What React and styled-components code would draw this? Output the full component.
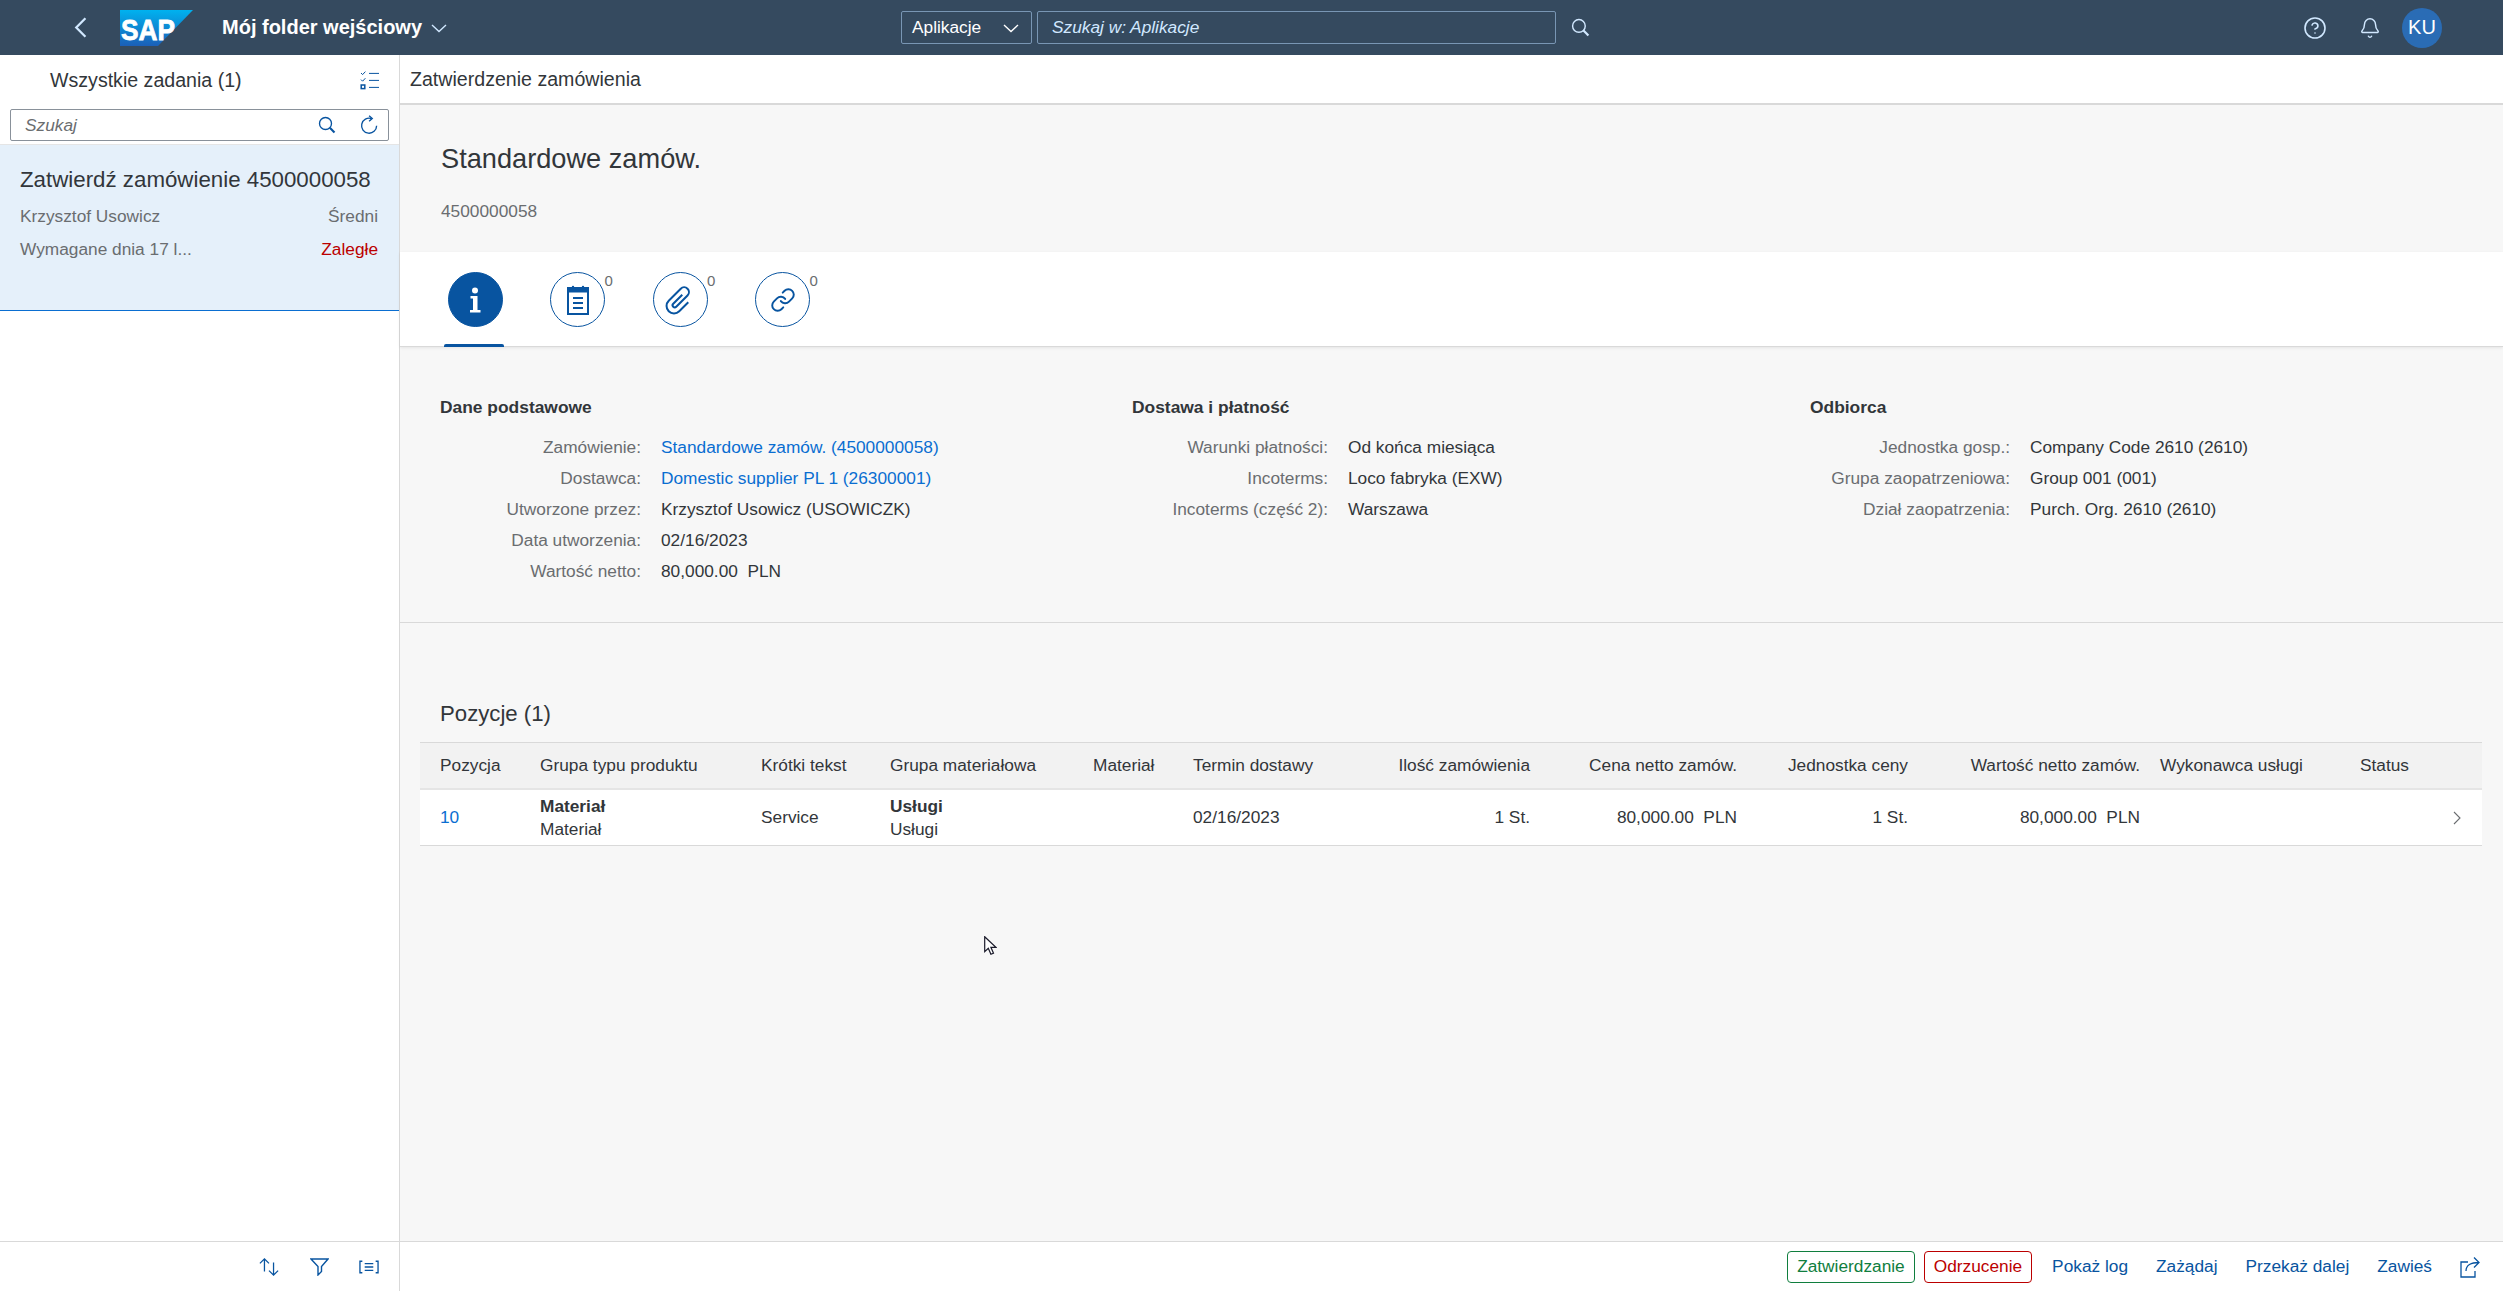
import React from 'react';
import styled, { createGlobalStyle } from 'styled-components';
import { Bell, CircleHelp, Link as LinkIcon } from 'lucide-react';

const GlobalStyle = createGlobalStyle`
  html, body {
    margin: 0;
    padding: 0;
    height: 100%;
    overflow: hidden;
    background: #fff;
    font-family: "Liberation Sans", Arial, sans-serif;
    font-size: 17.3px;
    color: #32363a;
  }
  #root { height: 100%; }
`;

const Page = styled.div`
  position: relative;
  height: 100vh;
  display: flex;
  flex-direction: column;
`;

/* ---------- shell bar ---------- */

const ShellBar = styled.header`
  flex: 0 0 55px;
  display: grid;
  grid-template-columns: 901px 1fr auto;
  align-items: center;
  background: #354a5f;
`;

const ShellLeft = styled.div`
  display: flex;
  align-items: center;
  padding-left: 71px;
`;

const BackButton = styled.span`
  display: flex;
  margin-right: 28px;
  color: #d1e8ff;
`;

const AppTitle = styled.span`
  margin-left: 29px;
  font-size: 20px;
  font-weight: 700;
  color: #fff;
`;

const TitleChevron = styled.span`
  display: flex;
  margin-left: 9px;
  color: #d1e8ff;
`;

const SearchGroup = styled.div`
  display: flex;
  align-items: center;
  gap: 5px;
`;

const ScopeSelect = styled.div`
  box-sizing: border-box;
  width: 131px;
  height: 33px;
  display: flex;
  align-items: center;
  justify-content: space-between;
  padding: 0 12px 0 10px;
  border: 1px solid #7996b4;
  border-radius: 2px;
  color: #fff;
`;

const ShellInput = styled.div`
  box-sizing: border-box;
  width: 519px;
  height: 33px;
  display: flex;
  align-items: center;
  padding-left: 14px;
  border: 1px solid #7996b4;
  border-radius: 2px;
  color: #d1e8ff;
  font-style: italic;
`;

const ShellSearch = styled.span`
  display: flex;
  margin-left: 10px;
  color: #d1e8ff;
`;

const ShellRight = styled.div`
  display: flex;
  align-items: center;
  padding-right: 61px;
`;

const ShellIcon = styled.span`
  width: 55px;
  display: flex;
  justify-content: center;
  color: #d1e8ff;
`;

const Avatar = styled.span`
  width: 40px;
  height: 40px;
  margin-left: 5px;
  display: flex;
  align-items: center;
  justify-content: center;
  border-radius: 50%;
  background: #2a6cb5;
  color: #fff;
  font-size: 20px;
`;

/* ---------- columns ---------- */

const Columns = styled.div`
  flex: 1;
  min-height: 0;
  display: flex;
`;

const MasterColumn = styled.aside`
  box-sizing: border-box;
  flex: 0 0 400px;
  display: flex;
  flex-direction: column;
  border-right: 1px solid #d9d9d9;
`;

const DetailColumn = styled.main`
  flex: 1;
  min-width: 0;
  display: flex;
  flex-direction: column;
`;

/* ---------- master list ---------- */

const MasterHeader = styled.div`
  box-sizing: border-box;
  height: 54px;
  display: flex;
  align-items: center;
  justify-content: space-between;
  padding: 0 20px 3px 50px;
  font-size: 19.6px;
`;

const SearchBar = styled.div`
  height: 35px;
  padding: 0 10px;
  border-bottom: 1px solid #e5e5e5;
`;

const SearchField = styled.div`
  box-sizing: border-box;
  height: 32px;
  display: flex;
  align-items: center;
  justify-content: space-between;
  padding: 0 9px 0 14px;
  border: 1px solid #89919a;
  border-radius: 2px;
`;

const Placeholder = styled.span`
  color: #6a6d70;
  font-style: italic;
`;

const SearchIcons = styled.span`
  display: flex;
  align-items: center;
  gap: 24px;
  color: #0854a0;
`;

const TaskItem = styled.div`
  box-sizing: border-box;
  height: 166px;
  padding: 21px 21px 0 20px;
  background: #e5f0fa;
  border-bottom: 1px solid #0a6ed1;
`;

const TaskTitle = styled.div`
  font-size: 22.3px;
  line-height: 28px;
`;

const TaskRow = styled.div`
  display: flex;
  justify-content: space-between;
  margin-top: ${props => props.$gap}px;
  line-height: 22px;
  color: #6a6d70;
`;

const Overdue = styled.span`
  color: #bb0000;
`;

const Spacer = styled.div`
  flex: 1;
`;

const MasterFooter = styled.footer`
  box-sizing: border-box;
  flex: 0 0 50px;
  display: flex;
  align-items: center;
  justify-content: flex-end;
  gap: 30px;
  padding-right: 20px;
  border-top: 1px solid #d9d9d9;
  color: #0854a0;
`;

const FooterIcon = styled.span`
  width: 20px;
  display: flex;
  justify-content: center;
`;

/* ---------- detail header ---------- */

const DetailTitleBar = styled.div`
  box-sizing: border-box;
  flex: 0 0 50px;
  display: flex;
  align-items: center;
  padding-left: 10px;
  border-bottom: 2px solid #d9d9d9;
  font-size: 19.6px;
`;

const Scroll = styled.div`
  flex: 1;
  min-height: 0;
  background: #f7f7f7;
`;

const ObjectHeader = styled.div`
  box-sizing: border-box;
  height: 147px;
  padding: 38px 41px 0;
`;

const ObjectTitle = styled.h1`
  margin: 0;
  font-size: 27.2px;
  font-weight: 400;
  line-height: 32px;
`;

const ObjectNumber = styled.div`
  margin-top: 26px;
  line-height: 20px;
  color: #6a6d70;
`;

/* ---------- icon tabs ---------- */

const TabBar = styled.div`
  box-sizing: border-box;
  height: 95px;
  display: flex;
  padding-left: 24px;
  background: #fff;
  border-bottom: 1px solid #d9d9d9;
  box-shadow: 0 1px 3px rgba(0, 0, 0, 0.08);
`;

const Tab = styled.div`
  position: relative;
  width: 102.5px;
  padding-top: 20px;
  display: flex;
  justify-content: center;
  align-items: flex-start;
`;

const TabCircle = styled.span`
  box-sizing: border-box;
  width: 55px;
  height: 55px;
  display: flex;
  align-items: center;
  justify-content: center;
  border-radius: 50%;
  border: 1px solid #0854a0;
  background: ${props => (props.$active ? '#0854a0' : '#fff')};
  color: ${props => (props.$active ? '#fff' : '#0854a0')};
`;

const TabCount = styled.span`
  position: absolute;
  left: 78px;
  top: 20px;
  font-size: 15px;
  line-height: 18px;
  color: #6a6d70;
`;

const TabUnderline = styled.span`
  position: absolute;
  left: 20px;
  bottom: -1px;
  width: 60px;
  height: 3px;
  border-radius: 2px 2px 0 0;
  background: #0854a0;
`;

/* ---------- form ---------- */

const FormArea = styled.section`
  box-sizing: border-box;
  height: 276px;
  display: grid;
  grid-template-columns: 692px 678px 1fr;
  padding: 49px 0 0 40px;
  border-bottom: 1px solid #d9d9d9;
`;

const FormTitle = styled.h3`
  margin: 0 0 14px;
  font-size: 17.4px;
  font-weight: 700;
  line-height: 22px;
`;

const FormRow = styled.div`
  display: grid;
  grid-template-columns: ${props => props.$labelWidth}px 1fr;
  column-gap: 20px;
  line-height: 31px;
`;

const FormLabel = styled.span`
  text-align: right;
  color: #6a6d70;
`;

const FormValue = styled.span`
  white-space: pre;
  color: ${props => (props.$link ? '#0a6ed1' : 'inherit')};
`;

/* ---------- table ---------- */

const TableTitle = styled.h2`
  margin: 77px 0 14px 40px;
  font-size: 22.2px;
  font-weight: 400;
  line-height: 28px;
`;

const tableColumns = '100px 221px 129px 203px 100px 167px 190px 207px 171px 232px 200px 100px 1fr';

const TableHead = styled.div`
  box-sizing: border-box;
  height: 48px;
  margin: 0 21px 0 20px;
  display: grid;
  grid-template-columns: ${tableColumns};
  align-items: center;
  background: #f2f2f2;
  border-top: 1px solid #d9d9d9;
  border-bottom: 2px solid #e5e5e5;
`;

const TableRow = styled.div`
  box-sizing: border-box;
  height: 56px;
  margin: 0 21px 0 20px;
  display: grid;
  grid-template-columns: ${tableColumns};
  align-items: center;
  background: #fff;
  border-bottom: 1px solid #d9d9d9;
`;

const Cell = styled.div`
  padding-left: 20px;
  text-align: ${props => (props.$right ? 'right' : 'left')};
  line-height: 23px;
  white-space: pre;
`;

const CellLink = styled.span`
  color: #0a6ed1;
`;

const Strong = styled.div`
  font-weight: 700;
`;

const RowChevron = styled.span`
  display: flex;
  justify-content: flex-end;
  padding-right: 17px;
  color: #6a6d70;
`;

/* ---------- footer ---------- */

const DetailFooter = styled.footer`
  box-sizing: border-box;
  flex: 0 0 50px;
  display: flex;
  align-items: center;
  justify-content: flex-end;
  padding: 0 23px 0 0;
  border-top: 1px solid #d9d9d9;
  background: #fff;
`;

const OutlineButton = styled.span`
  box-sizing: border-box;
  height: 32px;
  display: flex;
  align-items: center;
  margin-right: 9px;
  padding: 0 9px;
  border: 1px solid ${props => props.$color};
  border-radius: 4px;
  color: ${props => props.$color};
`;

const TextAction = styled.span`
  margin-left: ${props => (props.$first ? 11 : 28)}px;
  color: #0854a0;
`;

const ShareButton = styled.span`
  display: flex;
  margin-left: 28px;
  color: #0854a0;
`;

const MouseCursor = styled.svg`
  position: absolute;
  left: 984px;
  top: 936px;
`;

/* ---------- drawings ---------- */

const Chevron = ({ size = 16, dir = 'down', width = 1.4 }) => {
  const points = {
    down: '1,5 8,11.500 15,5',
    left: '11,1 4,8 11,15',
    right: '5,2 11,8 5,14',
  };
  return (
    <svg width={size} height={size} viewBox="0 0 16 16" fill="none" stroke="currentColor" strokeWidth={width}>
      <polyline points={points[dir]} />
    </svg>
  );
};

const SearchGlyph = ({ size = 19 }) => (
  <svg width={size} height={size} viewBox="0 0 24 24" fill="none" stroke="currentColor">
    <circle cx="10" cy="10" r="8" strokeWidth="1.8" />
    <path d="M15.8 15.8L22 22" strokeWidth="2.8" />
  </svg>
);

const RefreshGlyph = () => (
  <svg width="19" height="20" viewBox="0 0 24 25" fill="none" stroke="currentColor" strokeWidth="1.7">
    <path d="M21 13.5A9.5 9.5 0 1 1 14.5 4.4" />
    <path d="M11.5 0.8l4 3.6-4 3.4" />
  </svg>
);

const ChecklistGlyph = () => (
  <svg width="19" height="19" viewBox="0 0 19 19" fill="none" stroke="#0854a0" strokeWidth="1">
    <path d="M1 2l1.6 1.6L5.4 .6M1 8.6l1.6 1.6 2.8-3" />
    <rect x="1.2" y="14" width="3.6" height="3.6" strokeWidth="1.5" />
    <path d="M9 2.4h10M9 9.4h10M9 16.4h10" />
  </svg>
);

const SapLogo = () => (
  <svg width="73" height="36" viewBox="0 0 73 36">
    <defs>
      <linearGradient id="sapBlue" x1="0" y1="0" x2="0" y2="1">
        <stop offset="0" stopColor="#00b2ef" />
        <stop offset="1" stopColor="#1b5fb8" />
      </linearGradient>
    </defs>
    <polygon points="0,0 73,0 38,36 0,36" fill="url(#sapBlue)" />
    <text
      x="1"
      y="30"
      fill="#fff"
      stroke="#fff"
      strokeWidth="0.8"
      fontFamily="Liberation Sans, Arial, sans-serif"
      fontWeight="700"
      fontSize="30"
      textLength="54"
      lengthAdjust="spacingAndGlyphs"
    >
      SAP
    </text>
  </svg>
);

const InfoGlyph = () => (
  <svg width="26" height="28" viewBox="0 0 26 28" fill="currentColor">
    <circle cx="13" cy="4.5" r="3" />
    <path d="M8.5 10h7v14h3v2.5H8v-2.5h3V12.5H8.5z" />
  </svg>
);

const NotesGlyph = () => (
  <svg width="22" height="30" viewBox="0 0 22 30" fill="none" stroke="currentColor" strokeWidth="2">
    <rect x="1" y="3" width="20" height="26" />
    <path d="M1 5.5h20" strokeWidth="4" />
    <circle cx="6" cy="2" r="1.2" fill="currentColor" stroke="none" />
    <circle cx="16" cy="2" r="1.2" fill="currentColor" stroke="none" />
    <path d="M6 13h10M6 18h10M6 23h10" />
  </svg>
);

const ClipGlyph = () => (
  <svg width="34" height="34" viewBox="-3 -3 32 32" fill="none" stroke="currentColor" strokeWidth="1.900">
    <path transform="rotate(45 13 13)" d="M20 9v12a7 7 0 0 1-14 0V5a4.5 4.5 0 0 1 9 0v15a2 2 0 0 1-4 0V8" />
  </svg>
);

const SortGlyph = () => (
  <svg width="22" height="20" viewBox="0 0 22 20" fill="none" stroke="currentColor" strokeWidth="1.4">
    <path d="M6 15V1M1 6l5-5 5 5M16 5v14M11 14l5 5 5-5" />
  </svg>
);

const FilterGlyph = () => (
  <svg width="19" height="18" viewBox="0 0 19 18" fill="none" stroke="currentColor" strokeWidth="1.4">
    <path d="M1 1h17l-6.5 7.5v5L8 17V8.5z" />
  </svg>
);

const GroupGlyph = () => (
  <svg width="21" height="14" viewBox="0 0 21 14" fill="none" stroke="currentColor" strokeWidth="1.4">
    <path d="M3.5 1H1v12h2.5M17.5 1H20v12h-2.5M6 3.5h9M6 7h9M6 10.5h9" />
  </svg>
);

const ShareGlyph = () => (
  <svg width="20" height="22" viewBox="0 0 20 22" fill="none" stroke="currentColor" strokeWidth="1.3">
    <path d="M8 6H1v15h14v-6" />
    <path d="M6 15c0-6 5-8.500 13-8.500M14 1.500l5 5-5 5" />
  </svg>
);

/* ---------- data ---------- */

const basicRows = [
  ['Zamówienie:', 'Standardowe zamów. (4500000058)', true],
  ['Dostawca:', 'Domestic supplier PL 1 (26300001)', true],
  ['Utworzone przez:', 'Krzysztof Usowicz (USOWICZK)'],
  ['Data utworzenia:', '02/16/2023'],
  ['Wartość netto:', '80,000.00  PLN'],
];

const deliveryRows = [
  ['Warunki płatności:', 'Od końca miesiąca'],
  ['Incoterms:', 'Loco fabryka (EXW)'],
  ['Incoterms (część 2):', 'Warszawa'],
];

const receiverRows = [
  ['Jednostka gosp.:', 'Company Code 2610 (2610)'],
  ['Grupa zaopatrzeniowa:', 'Group 001 (001)'],
  ['Dział zaopatrzenia:', 'Purch. Org. 2610 (2610)'],
];

const formSections = [
  { title: 'Dane podstawowe', rows: basicRows, labelWidth: 201 },
  { title: 'Dostawa i płatność', rows: deliveryRows, labelWidth: 196 },
  { title: 'Odbiorca', rows: receiverRows, labelWidth: 200 },
];

const tableHeads = [
  ['Pozycja'],
  ['Grupa typu produktu'],
  ['Krótki tekst'],
  ['Grupa materiałowa'],
  ['Materiał'],
  ['Termin dostawy'],
  ['Ilość zamówienia', true],
  ['Cena netto zamów.', true],
  ['Jednostka ceny', true],
  ['Wartość netto zamów.', true],
  ['Wykonawca usługi'],
  ['Status'],
];

const App = () => (
  <Page>
    <GlobalStyle />
    <ShellBar>
      <ShellLeft>
        <BackButton>
          <Chevron size={21} dir="left" width={1.7} />
        </BackButton>
        <SapLogo />
        <AppTitle>Mój folder wejściowy</AppTitle>
        <TitleChevron>
          <Chevron />
        </TitleChevron>
      </ShellLeft>
      <SearchGroup>
        <ScopeSelect>
          Aplikacje
          <Chevron />
        </ScopeSelect>
        <ShellInput>Szukaj w: Aplikacje</ShellInput>
        <ShellSearch>
          <SearchGlyph />
        </ShellSearch>
      </SearchGroup>
      <ShellRight>
        <ShellIcon>
          <CircleHelp size={24} strokeWidth={1.6} />
        </ShellIcon>
        <ShellIcon>
          <Bell size={22} strokeWidth={1.6} />
        </ShellIcon>
        <Avatar>KU</Avatar>
      </ShellRight>
    </ShellBar>

    <Columns>
      <MasterColumn>
        <MasterHeader>
          Wszystkie zadania (1)
          <ChecklistGlyph />
        </MasterHeader>
        <SearchBar>
          <SearchField>
            <Placeholder>Szukaj</Placeholder>
            <SearchIcons>
              <SearchGlyph size={18} />
              <RefreshGlyph />
            </SearchIcons>
          </SearchField>
        </SearchBar>
        <TaskItem>
          <TaskTitle>Zatwierdź zamówienie 4500000058</TaskTitle>
          <TaskRow $gap={11}>
            <span>Krzysztof Usowicz</span>
            <span>Średni</span>
          </TaskRow>
          <TaskRow $gap={11}>
            <span>Wymagane dnia 17 l...</span>
            <Overdue>Zaległe</Overdue>
          </TaskRow>
        </TaskItem>
        <Spacer />
        <MasterFooter>
          <FooterIcon><SortGlyph /></FooterIcon>
          <FooterIcon><FilterGlyph /></FooterIcon>
          <FooterIcon><GroupGlyph /></FooterIcon>
        </MasterFooter>
      </MasterColumn>

      <DetailColumn>
        <DetailTitleBar>Zatwierdzenie zamówienia</DetailTitleBar>
        <Scroll>
          <ObjectHeader>
            <ObjectTitle>Standardowe zamów.</ObjectTitle>
            <ObjectNumber>4500000058</ObjectNumber>
          </ObjectHeader>

          <TabBar>
            <Tab>
              <TabCircle $active><InfoGlyph /></TabCircle>
              <TabUnderline />
            </Tab>
            <Tab>
              <TabCircle><NotesGlyph /></TabCircle>
              <TabCount>0</TabCount>
            </Tab>
            <Tab>
              <TabCircle><ClipGlyph /></TabCircle>
              <TabCount>0</TabCount>
            </Tab>
            <Tab>
              <TabCircle><LinkIcon size={26} strokeWidth={1.8} /></TabCircle>
              <TabCount>0</TabCount>
            </Tab>
          </TabBar>

          <FormArea>
            {formSections.map(section => (
              <div key={section.title}>
                <FormTitle>{section.title}</FormTitle>
                {section.rows.map(([label, value, isLink]) => (
                  <FormRow key={label} $labelWidth={section.labelWidth}>
                    <FormLabel>{label}</FormLabel>
                    <FormValue $link={isLink}>{value}</FormValue>
                  </FormRow>
                ))}
              </div>
            ))}
          </FormArea>

          <TableTitle>Pozycje (1)</TableTitle>
          <TableHead>
            {tableHeads.map(([label, right]) => (
              <Cell key={label} $right={right}>{label}</Cell>
            ))}
          </TableHead>
          <TableRow>
            <Cell><CellLink>10</CellLink></Cell>
            <Cell>
              <Strong>Materiał</Strong>
              Materiał
            </Cell>
            <Cell>Service</Cell>
            <Cell>
              <Strong>Usługi</Strong>
              Usługi
            </Cell>
            <Cell />
            <Cell>02/16/2023</Cell>
            <Cell $right>1 St.</Cell>
            <Cell $right>80,000.00  PLN</Cell>
            <Cell $right>1 St.</Cell>
            <Cell $right>80,000.00  PLN</Cell>
            <Cell />
            <Cell />
            <RowChevron>
              <Chevron size={16} dir="right" width={1.1} />
            </RowChevron>
          </TableRow>
        </Scroll>
        <DetailFooter>
          <OutlineButton $color="#107e3e">Zatwierdzanie</OutlineButton>
          <OutlineButton $color="#bb0000">Odrzucenie</OutlineButton>
          <TextAction $first>Pokaż log</TextAction>
          <TextAction>Zażądaj</TextAction>
          <TextAction>Przekaż dalej</TextAction>
          <TextAction>Zawieś</TextAction>
          <ShareButton><ShareGlyph /></ShareButton>
        </DetailFooter>
      </DetailColumn>
    </Columns>

    <MouseCursor width="13" height="20" viewBox="0 0 13 20">
      <path
        d="M.7.7v15l3.6-3.4 2.6 6 2.600-1.100-2.600-5.900h5z"
        fill="#fff"
        stroke="#1a1a2a"
        strokeWidth="1.200"
      />
    </MouseCursor>
  </Page>
);

export default App;
